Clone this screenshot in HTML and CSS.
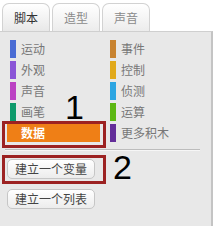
FILE: index.html
```html
<!DOCTYPE html>
<html lang="zh">
<head>
<meta charset="utf-8">
<link rel="stylesheet" href="styles.css">
</head>
<body>
<div class="app">
  <div class="tabs">
    <div class="tab active">脚本</div>
    <div class="tab">造型</div>
    <div class="tab">声音</div>
  </div>
  <div class="panel">
    <ul class="cats">
      <li class="cat"><span class="bar c-motion"></span>运动</li>
      <li class="cat"><span class="bar c-looks"></span>外观</li>
      <li class="cat"><span class="bar c-sound"></span>声音</li>
      <li class="cat"><span class="bar c-pen"></span>画笔</li>
      <li class="cat selected"><span class="bar c-data"></span>数据</li>
      <li class="cat"><span class="bar c-events"></span>事件</li>
      <li class="cat"><span class="bar c-control"></span>控制</li>
      <li class="cat"><span class="bar c-sensing"></span>侦测</li>
      <li class="cat"><span class="bar c-operators"></span>运算</li>
      <li class="cat"><span class="bar c-more"></span>更多积木</li>
    </ul>
    <div class="sep"></div>
    <div class="buttons">
      <button class="btn">建立一个变量</button>
      <button class="btn">建立一个列表</button>
    </div>
    <div class="mark mark1"></div>
    <div class="mark mark2"></div>
    <div class="num num1">1</div>
    <div class="num num2">2</div>
  </div>
</div>
</body>
</html>
```

FILE: styles.css
```css
* { box-sizing: border-box; }
html, body { margin: 0; padding: 0; background: #fff; }
body {
  width: 214px;
  height: 226px;
  overflow: hidden;
  font-family: "Noto Sans CJK SC", "Noto Sans", sans-serif;
  font-size: 12px;
}
.app { width: 214px; height: 226px; display: flex; flex-direction: column; }
.tabs {
  height: 31px;
  display: flex;
  align-items: flex-end;
  gap: 2px;
  padding-left: 2px;
}
.tab {
  width: 48px;
  height: 28px;
  border: 1px solid #d2d2d2;
  border-bottom: none;
  border-radius: 7px 7px 0 0;
  background: linear-gradient(#ffffff, #ececec);
  color: #8a8a8a;
  display: flex;
  align-items: center;
  justify-content: center;
  line-height: 1;
}
.tab.active { color: #333; background: linear-gradient(#ffffff, #e8e8e8); }
.panel {
  position: relative;
  flex: 1;
  width: 213px;
  background: #e8e8e8;
  border-top: 1px solid #cfcfcf;
  border-right: 2px solid #c4c4c4;
  display: flex;
  flex-direction: column;
}
.cats {
  list-style: none;
  margin: 0;
  padding: 8px 0 0 7px;
  display: grid;
  grid-template-columns: 100px 100px;
  grid-template-rows: repeat(5, 18px);
  grid-auto-flow: column;
  row-gap: 3px;
}
.cat {
  width: 93px;
  height: 18px;
  padding-left: 3px;
  display: flex;
  align-items: center;
  gap: 5px;
  color: #777;
  line-height: 1;
}
.bar { width: 6px; height: 18px; }
.cat.selected { background: #ef7f16; color: #fff; font-weight: bold; }
.c-motion { background: #4a6cd4; }
.c-looks { background: #8a55d7; }
.c-sound { background: #bb42c3; }
.c-pen { background: #0e9a6c; }
.c-data { background: #ef7f16; }
.c-events { background: #c88330; }
.c-control { background: #e1a91a; }
.c-sensing { background: #2ca5e2; }
.c-operators { background: #5cb712; }
.c-more { background: #632d99; }
.sep {
  margin: 7px 0 0 5px;
  width: 195px;
  height: 2px;
  border-top: 1px solid #bcbcbc;
  border-bottom: 1px solid #f6f6f6;
}
.buttons {
  display: flex;
  flex-direction: column;
  gap: 10px;
  padding: 8px 0 0 7px;
}
.btn {
  width: 88px;
  height: 20px;
  margin: 0;
  padding: 0;
  border: 1px solid #c6c6c6;
  border-radius: 5px;
  background: linear-gradient(#ffffff, #ececec);
  font-family: "Noto Sans CJK SC", "Noto Sans", sans-serif;
  font-size: 12px;
  color: #444;
  line-height: 1;
}
.mark {
  position: absolute;
  left: 2px;
  width: 104px;
  border: 3px solid #9c2222;
}
.mark1 { top: 89px; height: 27px; }
.mark2 { top: 123px; height: 29px; }
.num {
  position: absolute;
  font-family: "Liberation Sans", Arial, sans-serif;
  font-size: 34px;
  line-height: 1;
  color: #000;
}
.num1 { left: 65px; top: 58px; }
.num2 { left: 113px; top: 118px; }
```
